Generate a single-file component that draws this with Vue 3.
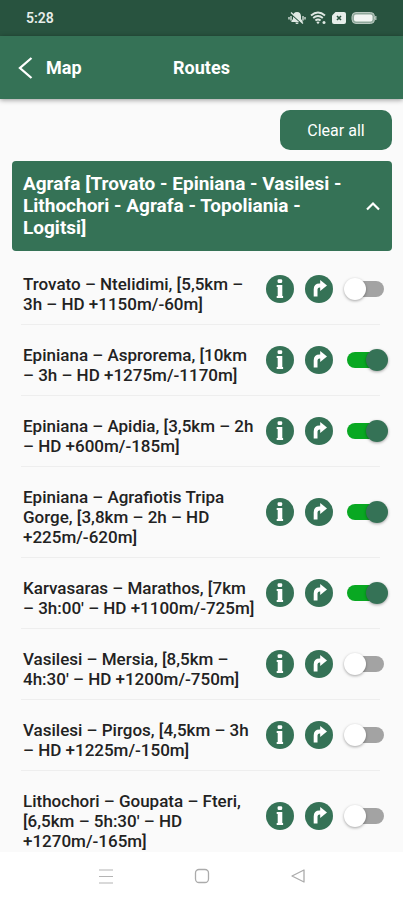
<template>
  <div class="screen">
    <div class="status-bar">
      <span class="time">5:28</span>
      <div class="status-icons">
        <svg width="18" height="14" viewBox="0 0 18 14">
          <path
            d="M9 1C6.200 1 5 3 5 5.300V8l-1.600 1.900v1h11.200v-1L13 8V5.300C13 3 11.800 1 9 1zM7.400 11.400h3.200a1.600 1.600 0 0 1-3.200 0z"
            fill="#dfe8e3"
          />
          <path d="M3 3l11.500 10" stroke="#28533f" stroke-width="1.500" />
          <path d="M3 1.500l12 11" stroke="#dfe8e3" stroke-width="1.300" />
          <path d="M1 6v2.500M3 5v4.500M15 5v4.500M17 6v2.500" stroke="#dfe8e3" stroke-width="1.300" />
        </svg>
        <svg width="17" height="14" viewBox="0 0 17 14">
          <g fill="none" stroke="#dfe8e3" stroke-width="1.900">
            <path d="M1 4.500q7-6 14 0" />
            <path d="M3.200 7q4.800-4 9.600 0" />
            <path d="M5.400 9.500q2.600-2.200 5.200 0" />
          </g>
          <path d="M6.300 11l1.700 2.200L9.700 11q-1.700-1.200-3.400 0z" fill="#dfe8e3" />
          <circle cx="14" cy="11.500" r="1.500" fill="#dfe8e3" />
        </svg>
        <svg width="16" height="14" viewBox="0 0 16 14">
          <path d="M4.500 1H13a2 2 0 0 1 2 2v8a2 2 0 0 1-2 2H3a2 2 0 0 1-2-2V4.500z" fill="#e6ede9" />
          <path d="M6 5l4 4M10 5l-4 4" stroke="#28533f" stroke-width="1.600" />
        </svg>
        <svg width="26" height="14" viewBox="0 0 26 14">
          <rect x="1" y="1.500" width="22.500" height="11" rx="4" fill="#8fa89b" stroke="#b9c9c0" />
          <rect x="3" y="3.500" width="18.500" height="7" rx="2" fill="#f1f5f2" />
          <path d="M24.800 5v4" stroke="#b9c9c0" stroke-width="1.300" />
        </svg>
      </div>
    </div>

    <header class="app-bar">
      <button class="back" type="button">
        <svg width="16" height="24" viewBox="0 0 16 24">
          <path d="M13.500 2L2 12l11.500 10" fill="none" stroke="#fff" stroke-width="2.300" />
        </svg>
        Map
      </button>
      <h1 class="title">Routes</h1>
    </header>

    <main class="content">
      <button class="clear" type="button" @click="clearAll">Clear all</button>

      <button class="region" type="button" :aria-expanded="open" @click="open = !open">
        <span>Agrafa [Trovato - Epiniana - Vasilesi - Lithochori - Agrafa - Topoliania - Logitsi]</span>
        <svg class="chevron" :class="{ closed: !open }" width="16" height="10" viewBox="0 0 16 10">
          <path d="M2 8.500l6-6 6 6" fill="none" stroke="#fff" stroke-width="2.200" />
        </svg>
      </button>

      <ul v-show="open" class="routes">
        <li v-for="route in routes" :key="route.id" class="route">
          <label class="name" :for="route.id">{{ route.name }}</label>
          <button class="round" type="button" aria-label="Info">
            <svg width="28" height="28" viewBox="0 0 28 28">
              <circle cx="14" cy="14" r="14" fill="#357256" />
              <rect x="11.600" y="4.300" width="4.600" height="3.700" rx="1.200" fill="#fff" />
              <path d="M10.700 10h5.600v11h.8v2h-6.400v-2h1v-9h-1z" fill="#fff" />
            </svg>
          </button>
          <button class="round" type="button" aria-label="Directions">
            <svg width="28" height="28" viewBox="0 0 28 28">
              <circle cx="14" cy="14" r="14" fill="#357256" />
              <path d="M10.600 21.500v-7q0-4 4-4H16" fill="none" stroke="#fff" stroke-width="3.800" />
              <path d="M15.200 5l6.800 5.500-6.800 5.500z" fill="#fff" />
            </svg>
          </button>
          <input :id="route.id" v-model="route.on" class="switch" type="checkbox" role="switch" />
        </li>
      </ul>
    </main>

    <nav class="nav-bar">
      <button type="button" aria-label="Recent apps">
        <svg width="16" height="16" viewBox="0 0 16 16">
          <path d="M1 2h14M1 8.500h14M1 15h14" stroke="#b4b4b4" stroke-width="1.200" />
        </svg>
      </button>
      <button type="button" aria-label="Home">
        <svg width="16" height="16" viewBox="0 0 16 16">
          <rect x="1.500" y="1.500" width="13" height="13" rx="3.500" fill="none" stroke="#ababab" stroke-width="1.300" />
        </svg>
      </button>
      <button type="button" aria-label="Back">
        <svg width="16" height="16" viewBox="0 0 16 16">
          <path d="M14 2v12L2 8z" fill="none" stroke="#ababab" stroke-width="1.300" stroke-linejoin="round" />
        </svg>
      </button>
    </nav>
  </div>
</template>

<script setup>
import { ref } from "vue";

const open = ref(true);

const routes = ref([
  { id: "ntelidimi", name: "Trovato – Ntelidimi, [5,5km – 3h – HD +1150m/-60m]", on: false },
  { id: "asprorema", name: "Epiniana – Asprorema, [10km – 3h – HD +1275m/-1170m]", on: true },
  { id: "apidia", name: "Epiniana – Apidia, [3,5km – 2h – HD +600m/-185m]", on: true },
  { id: "gorge", name: "Epiniana – Agrafiotis Tripa Gorge, [3,8km – 2h – HD +225m/-620m]", on: true },
  { id: "marathos", name: "Karvasaras – Marathos, [7km – 3h:00' – HD +1100m/-725m]", on: true },
  { id: "mersia", name: "Vasilesi – Mersia, [8,5km – 4h:30′ – HD +1200m/-750m]", on: false },
  { id: "pirgos", name: "Vasilesi – Pirgos, [4,5km – 3h – HD +1225m/-150m]", on: false },
  { id: "fteri", name: "Lithochori – Goupata – Fteri, [6,5km – 5h:30′ – HD +1270m/-165m]", on: false },
]);

const clearAll = () => {
  routes.value.forEach((route) => {
    route.on = false;
  });
};
</script>

<style>
body {
  margin: 0;
}
</style>

<style scoped>
.screen {
  display: flex;
  flex-direction: column;
  height: 100vh;
  overflow: hidden;
  background: #fafafa;
  color: #222;
  font-family: Roboto, "Liberation Sans", sans-serif;
}

button {
  padding: 0;
  border: 0;
  background: none;
  color: inherit;
  font-family: inherit;
  cursor: pointer;
}

svg {
  display: block;
  flex: none;
}

.status-bar {
  display: flex;
  flex: none;
  align-items: center;
  justify-content: space-between;
  height: 36px;
  padding: 0 26px;
  background: #28533f;
  color: #e6ede9;
}

.time {
  font-size: 14px;
  font-weight: 600;
}

.status-icons {
  display: flex;
  align-items: center;
  gap: 4px;
}

.app-bar {
  display: grid;
  grid-template-columns: 1fr auto 1fr;
  flex: none;
  align-items: center;
  height: 63px;
  padding: 0 18px;
  background: #357256;
  color: #fff;
  box-shadow: 0 1px 5px rgba(0, 0, 0, 0.4);
}

.back {
  display: flex;
  align-items: center;
  gap: 12px;
  font-size: 18px;
  font-weight: 700;
}

.title {
  margin: 0;
  font-size: 18px;
  font-weight: 700;
}

.content {
  display: flex;
  flex: 1;
  flex-direction: column;
  min-height: 0;
  padding: 11px 11px 0 12px;
  overflow: hidden;
}

.clear {
  flex: none;
  align-self: flex-end;
  width: 112px;
  height: 40px;
  border-radius: 10px;
  background: #357256;
  color: #fff;
  font-size: 16px;
}

.region {
  display: flex;
  flex: none;
  align-items: center;
  justify-content: space-between;
  gap: 20px;
  margin-top: 11px;
  padding: 12px 11px;
  border-radius: 4px;
  background: #357256;
  color: #fff;
  font-size: 19px;
  font-weight: 700;
  line-height: 22px;
  text-align: left;
}

.chevron.closed {
  transform: rotate(180deg);
}

.routes {
  flex: none;
  margin: 3px 0 0;
  padding: 0 12px 0 9px;
  list-style: none;
}

.route {
  display: flex;
  align-items: center;
  border-bottom: 1px solid #eee;
}

.name {
  flex: 1;
  padding: 20px 10px 10px 2px;
  font-size: 17px;
  font-weight: 500;
  line-height: 20px;
}

.round {
  flex: none;
  margin-right: 11px;
}

.switch {
  display: grid;
  flex: none;
  align-items: center;
  width: 44px;
  height: 24px;
  margin: 0 -8px 0 0;
  appearance: none;
  cursor: pointer;
}

.switch::before,
.switch::after {
  grid-area: 1 / 1;
  content: "";
}

.switch::before {
  height: 16px;
  margin: 0 4px 0 3px;
  border-radius: 8px;
  background: #a3a3a3;
}

.switch::after {
  width: 22px;
  height: 22px;
  border-radius: 50%;
  background: #fff;
  box-shadow: 0 1px 3px rgba(0, 0, 0, 0.35);
}

.switch:checked::before {
  background: #09a822;
}

.switch:checked::after {
  justify-self: end;
  background: #357256;
}

.nav-bar {
  display: flex;
  flex: none;
  align-items: center;
  justify-content: center;
  gap: 80px;
  height: 48px;
  background: #fff;
}
</style>
